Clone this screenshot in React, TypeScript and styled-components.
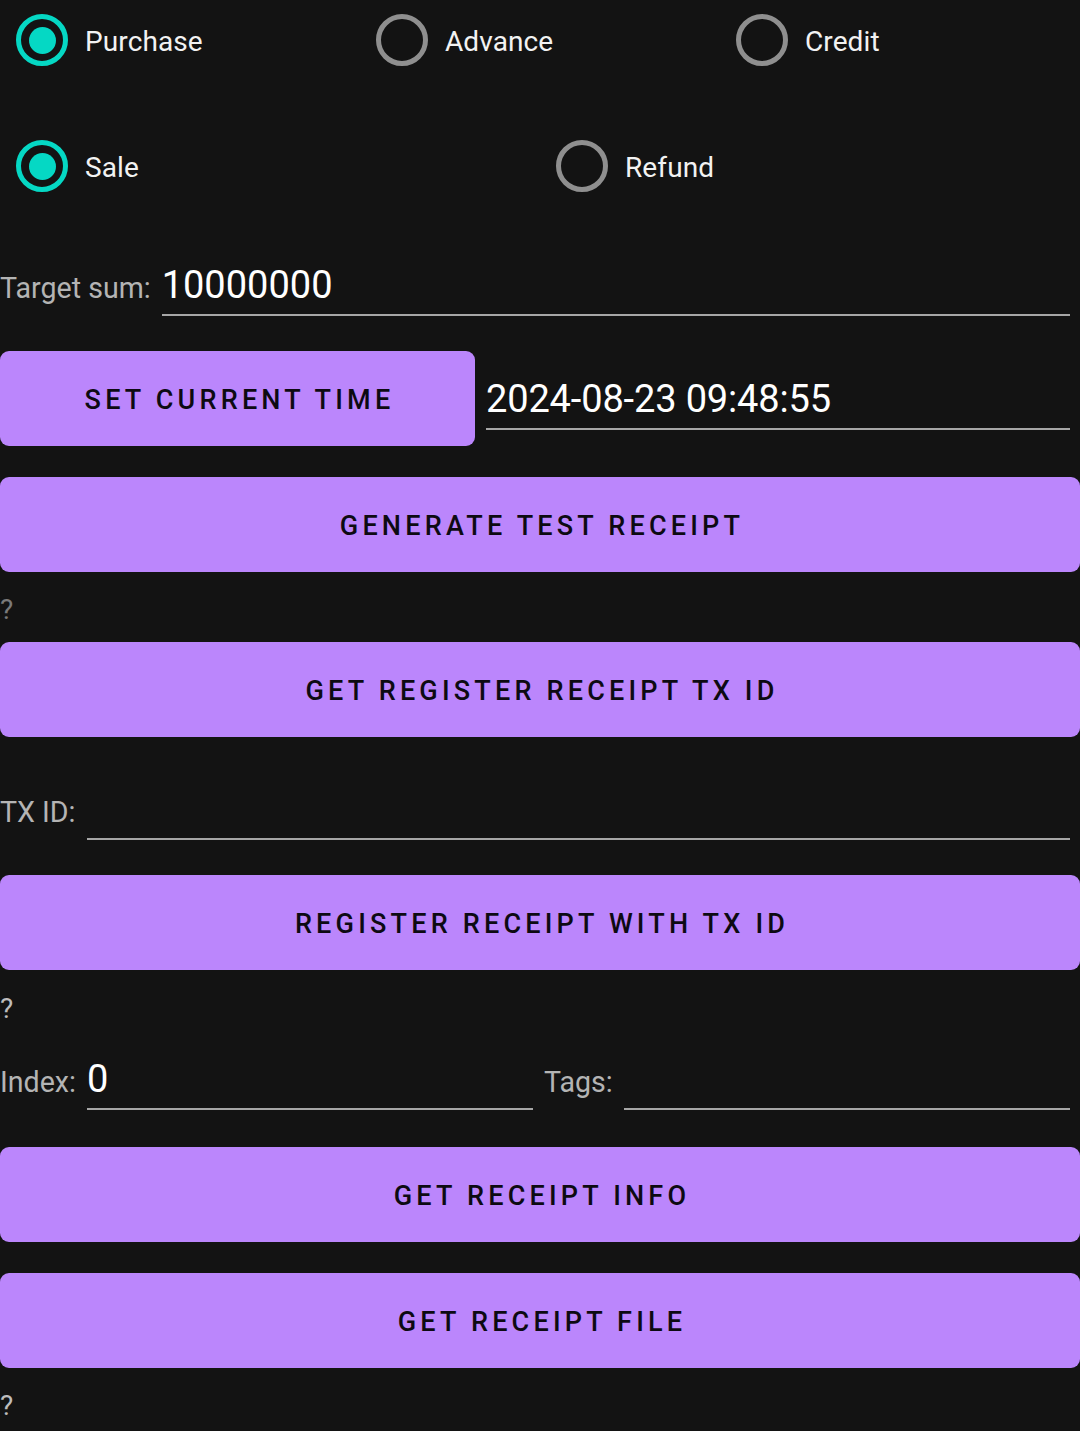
import React from "react";
import styled, { createGlobalStyle } from "styled-components";

const Global = createGlobalStyle`
  html, body {
    margin: 0;
    padding: 0;
    background: #131313;
  }
  body {
    font-family: Roboto, "Noto Sans", "Liberation Sans", sans-serif;
    color: #ffffff;
  }
`;

const Page = styled.div`
  display: flex;
  flex-direction: column;
  width: 1080px;
  min-height: 1431px;
  background: #131313;
  overflow: hidden;
`;

const RadioRow = styled.div<{ $cols: number; $mt: number }>`
  display: grid;
  grid-template-columns: repeat(${(p) => p.$cols}, 1fr);
  height: 80px;
  margin-top: ${(p) => p.$mt}px;
`;

const RadioItem = styled.div`
  display: flex;
  align-items: center;
  padding-left: 16px;
`;

const RadioCircle = styled.span<{ $checked: boolean }>`
  box-sizing: border-box;
  width: 52px;
  height: 52px;
  border-radius: 50%;
  border: 5px solid ${(p) => (p.$checked ? "#05d8c4" : "#8f8f8f")};
  display: flex;
  align-items: center;
  justify-content: center;
  flex: none;
  &::after {
    content: "";
    display: ${(p) => (p.$checked ? "block" : "none")};
    width: 27px;
    height: 27px;
    border-radius: 50%;
    background: #05d8c4;
  }
`;

const RadioLabel = styled.span`
  margin-left: 17px;
  margin-top: 2px;
  font-size: 28px;
  color: #f2f2f2;
  letter-spacing: 0.1px;
`;

const FieldRow = styled.div<{ $mt: number }>`
  display: flex;
  align-items: baseline;
  margin-top: ${(p) => p.$mt}px;
  padding-right: 10px;
`;

const Label = styled.span`
  font-size: 28.6px;
  color: #b4b4b4;
  white-space: nowrap;
  flex: none;
`;

const Field = styled.div<{ $ml?: number; $mr?: number; $mt?: number }>`
  flex: 1;
  font-size: 38px;
  line-height: 44px;
  color: #ffffff;
  padding-bottom: 7px;
  border-bottom: 2px solid #a6a6a6;
  margin-left: ${(p) => p.$ml ?? 11}px;
  margin-right: ${(p) => p.$mr ?? 0}px;
  margin-top: ${(p) => p.$mt ?? 0}px;
  white-space: nowrap;
`;

const DateField = styled(Field)`
  letter-spacing: -0.15px;
`;

const HalfGrid = styled.div<{ $mt: number }>`
  display: grid;
  grid-template-columns: 540px 540px;
  margin-top: ${(p) => p.$mt}px;
`;

const Half = styled.div<{ $pl: number; $pr: number }>`
  display: flex;
  align-items: baseline;
  padding-left: ${(p) => p.$pl}px;
  padding-right: ${(p) => p.$pr}px;
`;

const ButtonRow = styled.div<{ $mt: number }>`
  display: flex;
  align-items: flex-start;
  margin-top: ${(p) => p.$mt}px;
  padding-right: 10px;
`;

const Button = styled.button<{ $mt?: number; $w?: number }>`
  box-sizing: border-box;
  width: ${(p) => (p.$w ? `${p.$w}px` : "100%")};
  flex: none;
  height: 95px;
  margin-top: ${(p) => p.$mt ?? 0}px;
  border: none;
  border-radius: 9px;
  background: #bb86fc;
  color: #0d0a12;
  font-family: Roboto, "Noto Sans", "Liberation Sans", sans-serif;
  font-weight: 500;
  font-size: 27px;
  letter-spacing: 4.2px;
  text-transform: uppercase;
  display: flex;
  align-items: center;
  justify-content: center;
  padding: 2px 0 0 4px;
  cursor: pointer;
`;

const Result = styled.div<{ $mt: number; $dim?: boolean }>`
  margin-top: ${(p) => p.$mt}px;
  font-size: 28px;
  line-height: 33px;
  color: ${(p) => (p.$dim ? "#7a7a7a" : "#bdbdbd")};
`;

function Radio({ label, checked }: { label: string; checked?: boolean }) {
  return (
    <RadioItem>
      <RadioCircle $checked={!!checked} />
      <RadioLabel>{label}</RadioLabel>
    </RadioItem>
  );
}

export default function App() {
  return (
    <>
      <Global />
      <Page>
        <RadioRow $cols={3} $mt={0}>
          <Radio label="Purchase" checked />
          <Radio label="Advance" />
          <Radio label="Credit" />
        </RadioRow>
        <RadioRow $cols={2} $mt={46}>
          <Radio label="Sale" checked />
          <Radio label="Refund" />
        </RadioRow>

        <FieldRow $mt={57}>
          <Label>Target sum:</Label>
          <Field $ml={11}>10000000</Field>
        </FieldRow>

        <ButtonRow $mt={35}>
          <Button $w={475}>Set current time</Button>
          <DateField $ml={11} $mt={26}>
            2024-08-23 09:48:55
          </DateField>
        </ButtonRow>

        <Button $mt={31}>Generate test receipt</Button>
        <Result $mt={21} $dim>
          ?
        </Result>
        <Button $mt={16}>Get register receipt TX ID</Button>

        <FieldRow $mt={50}>
          <Label>TX ID:</Label>
          <Field $ml={11}>{"\u00a0"}</Field>
        </FieldRow>

        <Button $mt={35}>Register receipt with TX ID</Button>
        <Result $mt={22}>?</Result>

        <HalfGrid $mt={32}>
          <Half $pl={0} $pr={7}>
            <Label>Index:</Label>
            <Field $ml={11}>0</Field>
          </Half>
          <Half $pl={4} $pr={10}>
            <Label>Tags:</Label>
            <Field $ml={11}>{"\u00a0"}</Field>
          </Half>
        </HalfGrid>

        <Button $mt={37}>Get receipt info</Button>
        <Button $mt={31}>Get receipt file</Button>
        <Result $mt={21}>?</Result>
      </Page>
    </>
  );
}
